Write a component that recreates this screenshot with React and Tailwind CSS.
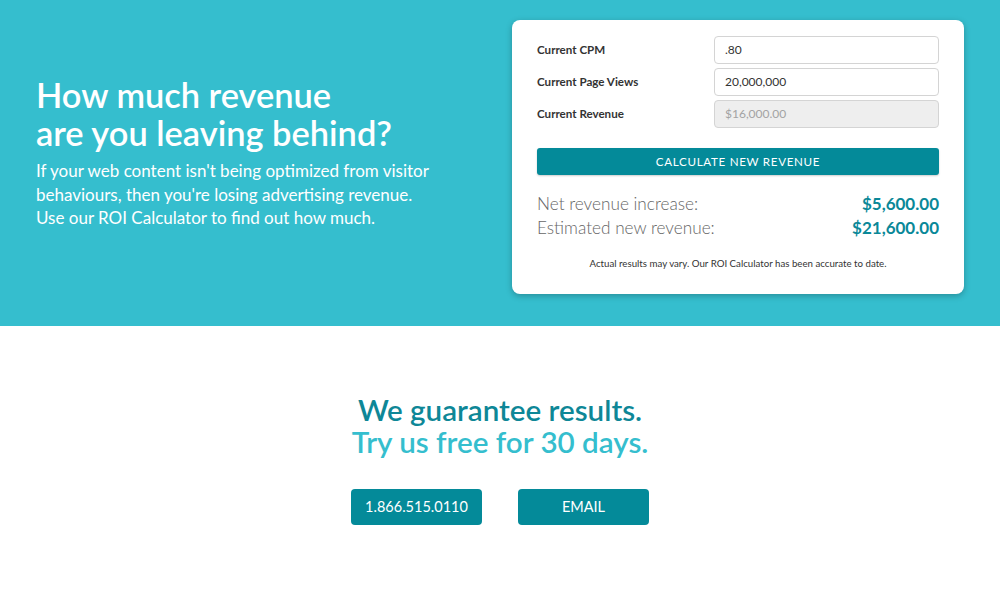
export default function App() {
  const rows = [
    { label: "Current CPM", value: ".80" },
    { label: "Current Page Views", value: "20,000,000" },
    { label: "Current Revenue", value: "$16,000.00", disabled: true },
  ];

  return (
    <div className="w-[1000px] h-[600px] bg-white font-['Lato','Open_Sans',sans-serif]">
      {/* Hero with calculator */}
      <section className="h-[326px] bg-[#35bece] flex items-center justify-between pl-[36px] pr-[36px] pt-[20px] pb-[32px]">
        <div className="text-white mb-[8px]">
          <h1 className="text-[34.4px] leading-[38px] font-semibold">
            How much revenue
            <br />
            are you leaving behind?
          </h1>
          <p className="mt-[7px] text-[17px] leading-[23.5px]">
            If your web content isn't being optimized from visitor
            <br />
            behaviours, then you're losing advertising revenue.
            <br />
            Use our ROI Calculator to find out how much.
          </p>
        </div>

        <div className="w-[452px] h-[274px] bg-white rounded-[8px] shadow-[0_2px_6px_rgba(0,0,0,0.25)] px-[25px] pt-[16px]">
          <div className="flex flex-col gap-[4px]">
            {rows.map((r) => (
              <div key={r.label} className="flex items-center justify-between">
                <label className="text-[11.6px] font-bold text-[#333]">{r.label}</label>
                <div
                  className={
                    r.disabled
                      ? "w-[225px] h-[28px] rounded-[4px] border border-[#d4d4d4] bg-[#eeeeee] px-[10px] flex items-center text-[12px] text-[#a3a3a3]"
                      : "w-[225px] h-[28px] rounded-[4px] border border-[#d4d4d4] bg-white px-[10px] flex items-center text-[12px] text-[#333]"
                  }
                >
                  {r.value}
                </div>
              </div>
            ))}
          </div>

          <button className="mt-[20px] w-full h-[27px] rounded-[3px] bg-[#048a99] text-white text-[11.6px] tracking-[0.06em] uppercase shadow-[0_1px_2px_rgba(0,0,0,0.2)]">
            Calculate new revenue
          </button>

          <div className="mt-[17px] flex flex-col">
            <div className="flex items-baseline justify-between leading-[24px]">
              <span className="text-[17.2px] font-light text-[#666]">Net revenue increase:</span>
              <span className="text-[17px] font-bold text-[#0a8898]">$5,600.00</span>
            </div>
            <div className="flex items-baseline justify-between leading-[24px]">
              <span className="text-[17.2px] font-light text-[#666]">Estimated new revenue:</span>
              <span className="text-[17px] font-bold text-[#0a8898]">$21,600.00</span>
            </div>
          </div>

          <p className="mt-[16px] text-center text-[9.7px] text-[#333]">
            Actual results may vary. Our ROI Calculator has been accurate to date.
          </p>
        </div>
      </section>

      {/* Guarantee */}
      <section className="flex flex-col items-center pt-[68px]">
        <h2 className="text-[29.6px] leading-[32px] font-semibold text-center">
          <span className="text-[#0e8797]">We guarantee results.</span>
          <br />
          <span className="text-[#35bece]">Try us free for 30 days.</span>
        </h2>
        <div className="mt-[31px] flex gap-[36px]">
          <button className="w-[131px] h-[36px] rounded-[4px] bg-[#048a99] text-white text-[14.5px]">
            1.866.515.0110
          </button>
          <button className="w-[131px] h-[36px] rounded-[4px] bg-[#048a99] text-white text-[14.5px]">
            EMAIL
          </button>
        </div>
      </section>
    </div>
  );
}
